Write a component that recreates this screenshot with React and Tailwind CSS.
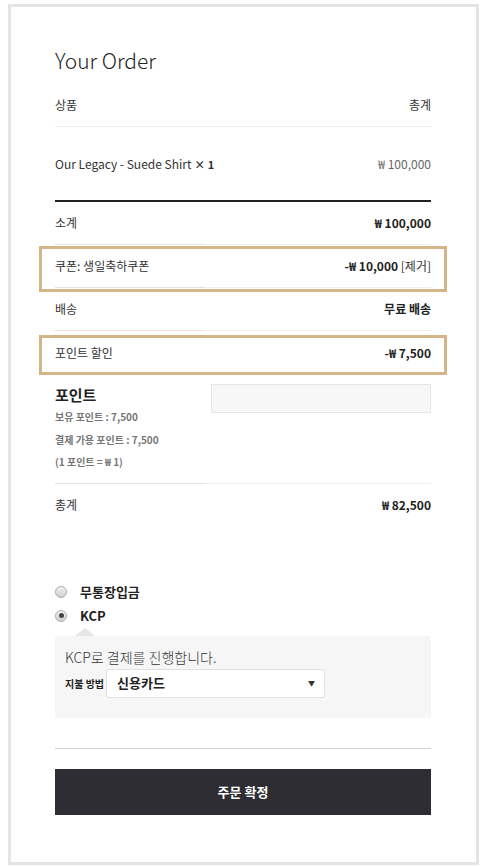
import React from 'react';

function Divider() {
  return (
    <div className="flex">
      <div className="w-[150px] h-px bg-[#e3e3e3]" />
      <div className="flex-1 h-px bg-[#f0f0f0]" />
    </div>
  );
}

function Radio({ checked }) {
  return (
    <span className="inline-flex w-[12px] h-[12px] rounded-full border border-[#aeaeae] bg-gradient-to-b from-[#f2f2f2] to-[#cfcfcf] items-center justify-center">
      {checked && <span className="w-[5px] h-[5px] rounded-full bg-[#444]" />}
    </span>
  );
}

export default function App() {
  return (
    <div className="min-h-screen bg-white pt-[4px] px-[8px] font-['Noto_Sans_CJK_KR',sans-serif] text-[#333]">
      <div className="w-[471px] h-[861px] border-[3px] border-[#e4e4e4] pl-[44px] pr-[45px] pt-[39px]">
        {/* Title */}
        <h2 className="text-[21px] leading-[28px] font-light text-[#222]">Your Order</h2>

        {/* Header */}
        <div className="mt-[10px] h-[43px] flex items-center justify-between border-b border-[#efefef] text-[12px]">
          <span>상품</span>
          <span>총계</span>
        </div>

        {/* Product */}
        <div className="h-[75px] flex items-center justify-between border-b-2 border-[#222] text-[12px]">
          <span>
            Our Legacy - Suede Shirt <strong className="font-bold text-[11px]">× 1</strong>
          </span>
          <span className="text-[#666]">₩ 100,000</span>
        </div>

        {/* Subtotal */}
        <div className="h-[42px] flex items-center justify-between text-[12px]">
          <span>소계</span>
          <span className="font-bold text-[#222]">₩ 100,000</span>
        </div>
        <Divider />

        {/* Coupon */}
        <div className="relative">
          <div className="h-[42px] flex items-center justify-between text-[12px]">
            <span>쿠폰: 생일축하쿠폰</span>
            <span>
              <span className="font-bold text-[#222]">-₩ 10,000</span> [제거]
            </span>
          </div>
          <Divider />
          <span className="absolute left-[-16px] right-[-16px] top-[1px] bottom-[-4px] border-[3px] border-[#d3b587]" />
        </div>

        {/* Shipping */}
        <div className="h-[42px] flex items-center justify-between text-[12px]">
          <span>배송</span>
          <span className="font-bold text-[#222]">무료 배송</span>
        </div>
        <Divider />

        {/* Point discount */}
        <div className="relative">
          <div className="h-[43px] flex items-center justify-between text-[12px]">
            <span>포인트 할인</span>
            <span className="font-bold text-[#222]">-₩ 7,500</span>
          </div>
          <span className="absolute left-[-16px] right-[-16px] top-[4px] bottom-[-1px] border-[3px] border-[#d3b587]" />
        </div>

        {/* Points */}
        <div className="flex justify-between">
          <div className="pt-[10px] pb-[9px]">
            <div className="text-[15px] leading-[22px] font-bold text-[#222]">포인트</div>
            <div className="text-[10px] leading-[22.5px] font-bold text-[#777]">보유 포인트 : 7,500</div>
            <div className="text-[10px] leading-[22.5px] font-bold text-[#777]">결제 가용 포인트 : 7,500</div>
            <div className="text-[10px] leading-[22.5px] font-bold text-[#777]">(1 포인트 = ₩ 1)</div>
          </div>
          <div className="mt-[10px] w-[220px] h-[29px] bg-[#f7f7f7] border border-[#e6e6e6]" />
        </div>
        <Divider />

        {/* Total */}
        <div className="h-[42px] flex items-center justify-between text-[12px]">
          <span>총계</span>
          <span className="font-bold text-[#222]">₩ 82,500</span>
        </div>

        {/* Payment methods */}
        <div className="mt-[54px]">
          <label className="flex items-center h-[24px]">
            <Radio />
            <span className="ml-[13px] text-[13px] font-bold text-[#222]">무통장입금</span>
          </label>
          <label className="flex items-center h-[24px]">
            <Radio checked />
            <span className="ml-[13px] text-[13px] font-bold text-[#222]">KCP</span>
          </label>
          <div className="ml-[20px] w-0 h-0 border-l-[10px] border-r-[10px] border-b-[8px] border-l-transparent border-r-transparent border-b-[#e6e6e6]" />
          <div className="bg-[#f6f6f6] px-[10px] pt-[11px] pb-[20px]">
            <p className="text-[14px] leading-[20px] font-light text-[#333]">KCP로 결제를 진행합니다.</p>
            <div className="mt-[2px] flex items-center">
              <span className="w-[41px] text-[10px] font-bold text-[#222]">지불 방법</span>
              <div className="w-[219px] h-[29px] bg-white border border-[#e0e0e0] rounded-[3px] flex items-center justify-between pl-[10px] pr-[9px]">
                <span className="text-[13px] font-bold text-[#222]">신용카드</span>
                <span className="text-[7px] text-[#333]">▼</span>
              </div>
            </div>
          </div>
        </div>

        {/* Divider */}
        <div className="mt-[30px] h-px bg-[#d2d2d2]" />

        {/* Button */}
        <button className="mt-[20px] w-full h-[46px] bg-[#2d2d33] text-white text-[13px] font-bold">
          주문 확정
        </button>
      </div>
    </div>
  );
}
